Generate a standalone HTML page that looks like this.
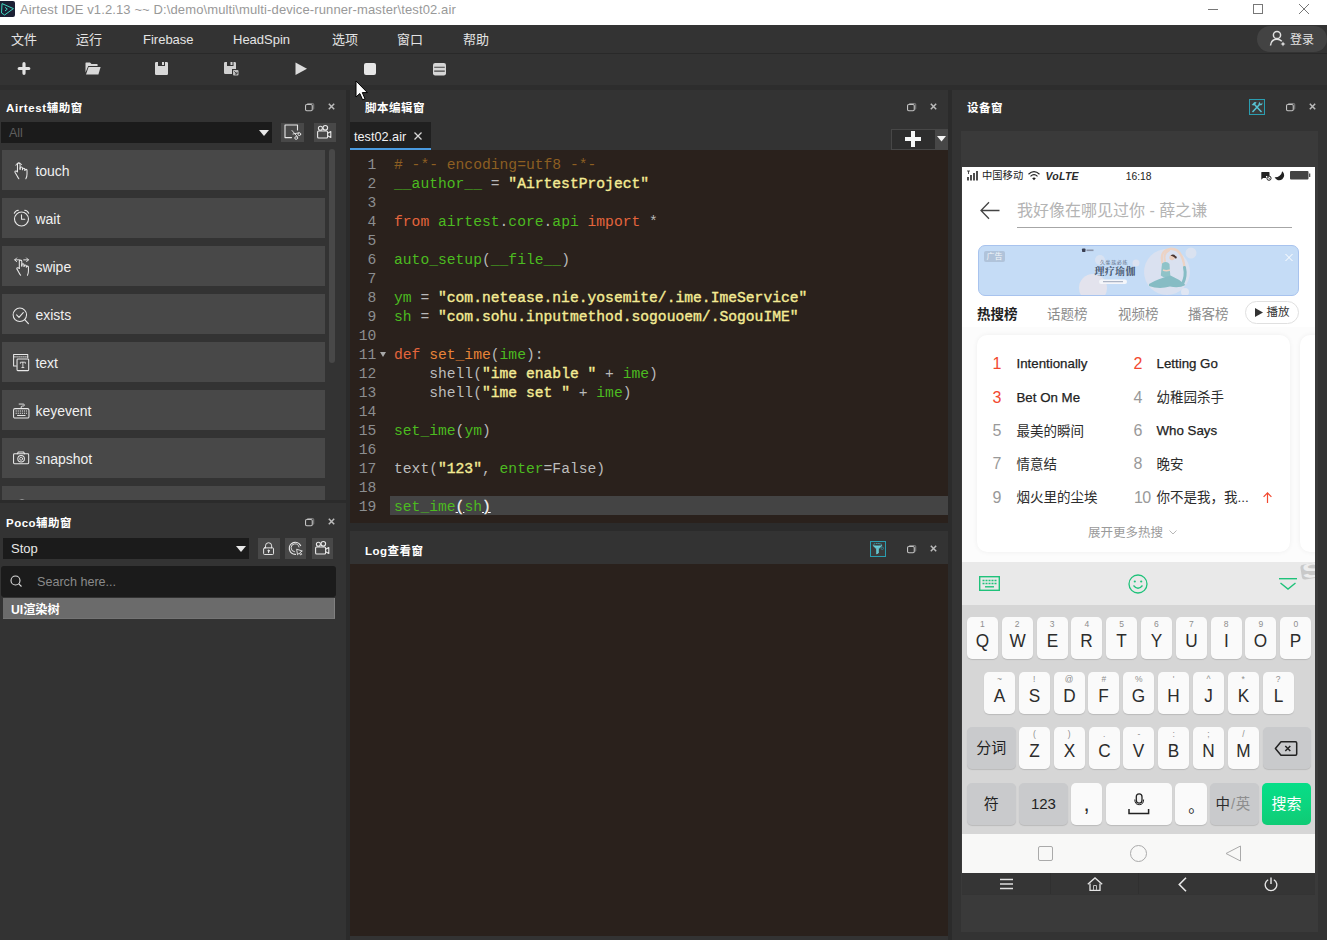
<!DOCTYPE html>
<html lang="zh">
<head>
<meta charset="utf-8">
<title>Airtest IDE</title>
<style>
*{box-sizing:border-box;margin:0;padding:0}
html,body{width:1327px;height:940px;overflow:hidden;background:#2b2b2b}
body{position:relative;font-family:"Liberation Sans","Noto Sans CJK SC",sans-serif;font-size:13px;color:#e6e6e6}
.abs{position:absolute}
svg{display:block;position:absolute;overflow:visible}
/* title bar */
#titlebar{left:0;top:0;width:1327px;height:25px;background:#fff}
#titletext{left:20px;top:2px;font-size:13px;line-height:16px;color:#999;white-space:nowrap;letter-spacing:.12px}
/* menu */
#menubar{left:0;top:25px;width:1327px;height:28px;background:#333}
.menu{top:5.500px;font-size:13px;line-height:18px;color:#e4e4e4;white-space:nowrap}
#menusep{left:0;top:52.500px;width:1327px;height:1px;background:#292929}
#toolbar{left:0;top:54px;width:1327px;height:31px;background:#333}
#gap{left:0;top:85px;width:1327px;height:5px;background:#2d2d2d}
/* panels */
.panel{background:#333}
.ptitle{font-weight:bold;letter-spacing:.5px;font-size:11.500px;line-height:16px;color:#fff;white-space:nowrap}
.abtn{left:2px;width:323px;height:40px;background:#484848}
.abtn span{position:absolute;left:33.400px;top:12px;font-size:14px;line-height:18px;color:#f0f0f0}
.sbtn{background:#484848}
/* code */
#code{left:350px;top:150px;width:598px;height:373px;background:#2a211c;overflow:hidden}
.ln{position:absolute;left:0;width:26.300px;text-align:right;color:#8c8e90;font-family:"Liberation Mono",monospace;font-size:14.67px;line-height:19px;height:19px}
.cl{position:absolute;left:44px;white-space:pre;font-family:"Liberation Mono",monospace;font-size:14.67px;line-height:19px;height:19px;color:#b9b9b9}
.c{color:#8d5f22}.g{color:#4cbb20}.k{color:#e5653c}.s{color:#f4eb94;-webkit-text-stroke:.38px #f4eb94}.o{color:#b4b4b4}.f{color:#e88438}.b{color:#f4f4f4;text-decoration:underline;-webkit-text-stroke:.3px #f4f4f4}.w{color:#bdbdbd}
.ph{font-family:"Liberation Sans","Noto Sans CJK SC",sans-serif}
.key{border-radius:5px;box-shadow:0 1px 1px rgba(0,0,0,.13)}
.key i{position:absolute;left:0;right:0;top:2.500px;text-align:center;font-style:normal;font-size:8.500px;line-height:9px;color:#8e8e8e}
.key b{position:absolute;left:0;right:0;top:11px;text-align:center;font-weight:normal;line-height:26px;white-space:nowrap;transform:scaleX(.93)}
.key b.n{top:8px;transform:none}
</style>
</head>
<body>
<!-- TITLE BAR -->
<div id="titlebar" class="abs">
  <svg style="left:0;top:1px" width="15" height="16" viewBox="0 0 15 16"><path d="M0 0 H13 a2 2 0 0 1 2 2 V14 a2 2 0 0 1 -2 2 H0 Z" fill="#1c2034"/><path d="M2 2.600 L13.400 7.600 L4.600 14 L1.500 12 Z" fill="none" stroke="#3fd6bf" stroke-width="1" stroke-linejoin="round"/><path d="M5 6.300 L7.300 8.100 L5 10" fill="none" stroke="#3fd6bf" stroke-width="1"/></svg>
  <div id="titletext" class="abs">Airtest IDE v1.2.13 ~~ D:\demo\multi\multi-device-runner-master\test02.air</div>
  <svg style="left:1208px;top:9px" width="10" height="1"><rect width="10" height="1" fill="#777"/></svg>
  <svg style="left:1253px;top:4px" width="10" height="10"><rect x=".5" y=".5" width="9" height="9" fill="none" stroke="#777" stroke-width="1"/></svg>
  <svg style="left:1299px;top:4px" width="10" height="10"><path d="M0 0 L10 10 M10 0 L0 10" stroke="#777" stroke-width="1"/></svg>
</div>
<!-- MENU BAR -->
<div id="menubar" class="abs">
  <div class="abs menu" style="left:11px">文件</div>
  <div class="abs menu" style="left:76px">运行</div>
  <div class="abs menu" style="left:143px">Firebase</div>
  <div class="abs menu" style="left:233px">HeadSpin</div>
  <div class="abs menu" style="left:332px">选项</div>
  <div class="abs menu" style="left:397px">窗口</div>
  <div class="abs menu" style="left:463px">帮助</div>
  <div class="abs" style="left:1257px;top:1px;width:70px;height:26px;border-radius:13px;background:#434343"></div>
  <svg style="left:1269px;top:5px" width="18" height="17" viewBox="0 0 18 17"><circle cx="8" cy="5" r="3.6" fill="none" stroke="#e0e0e0" stroke-width="1.5"/><path d="M1.5 15.5 C2 11 5 9.3 8 9.3 C10 9.3 11.6 10 12.8 11.2" fill="none" stroke="#e0e0e0" stroke-width="1.5"/><path d="M14 11.5 L14.8 13.2 L16.5 14 L14.8 14.8 L14 16.5 L13.2 14.8 L11.5 14 L13.2 13.2 Z" fill="#e0e0e0"/></svg>
  <div class="abs menu" style="left:1290px;top:5.500px;font-size:12px">登录</div>
</div>
<div id="menusep" class="abs"></div>
<!-- TOOLBAR -->
<div id="toolbar" class="abs">
  <svg style="left:17px;top:8px" width="14" height="13"><path d="M7 1.700 V11.300 M2.200 6.500 H11.800" stroke="#e2e2e2" stroke-width="3.200" stroke-linecap="round"/></svg>
  <svg style="left:85px;top:8px" width="16" height="13" viewBox="0 0 16 13"><path d="M0.5 10.5 V1 a.6 .6 0 0 1 .6-.6 H5 L6.5 2 H12 a.6 .6 0 0 1 .6 .6 V4 H3.2 Z" fill="#d8d8d8"/><path d="M3.6 5 H15.6 L13.4 12.6 H1 Z" fill="#d8d8d8"/></svg>
  <svg style="left:155px;top:8px" width="13" height="13" viewBox="0 0 13 13"><path d="M1.2 0 H3 V4 H10 V0 H11.8 A1.2 1.2 0 0 1 13 1.2 V11.8 A1.2 1.2 0 0 1 11.800 13 H1.2 A1.2 1.2 0 0 1 0 11.800 V1.2 A1.200 1.200 0 0 1 1.200 0 Z M7 0 H9 V3 H7 Z" fill="#d8d8d8"/></svg>
  <svg style="left:224px;top:8px" width="15" height="14" viewBox="0 0 15 14"><path d="M1.2 0 H3 V4 H9.500 V0 H10.8 A1.2 1.2 0 0 1 12 1.2 V7 H8 V12 H1.2 A1.2 1.2 0 0 1 0 10.800 V1.200 A1.2 1.2 0 0 1 1.200 0 Z M6.500 0 H8.500 V3 H6.500 Z" fill="#d0d0d0"/><rect x="9" y="8" width="5.500" height="5.500" rx="1" fill="#bdbdbd"/><path d="M10.300 9.300 L13 12 M13 10 V12 H11" stroke="#444" stroke-width="1" fill="none"/></svg>
  <svg style="left:295px;top:8px" width="13" height="14"><path d="M0.5 0.500 L12 6.800 L0.500 13 Z" fill="#dcdcdc"/></svg>
  <svg style="left:364px;top:9px" width="12" height="12"><rect width="12" height="12" rx="2" fill="#e6e6e6"/></svg>
  <svg style="left:432.500px;top:8.800px" width="13" height="12.400" viewBox="0 0 13 12.400"><rect width="13" height="12.400" rx="2.200" fill="#d6d6d6"/><path d="M1.200 4.300 H11.800 M1.200 8.100 H11.800" stroke="#444" stroke-width="1.100"/></svg>
</div>
<div id="gap" class="abs"></div>

<!-- LEFT: AIRTEST PANEL -->
<div id="airtest" class="abs panel" style="left:0;top:90px;width:346px;height:410px;overflow:hidden">
  <div class="abs ptitle" style="left:6px;top:10px"><span style="letter-spacing:.6px">Airtest</span>辅助窗</div>
  <svg style="left:304.800px;top:12.800px" width="9.200" height="8.300" viewBox="0 0 10 9"><rect x=".6" y="1.600" width="7.300" height="6.800" rx="1.300" fill="none" stroke="#c4c4c4" stroke-width="1.200"/><path d="M2 1.300 Q2.300 .5 3.200 .5 H8.300 Q9.500 .5 9.500 1.700 V6 Q9.500 6.800 8.600 7.200" fill="none" stroke="#8c8c8c" stroke-width="1"/></svg>
  <svg style="left:328px;top:13px" width="7" height="7"><path d="M.8 .8 L6.200 6.200 M6.200 .8 L.8 6.200" stroke="#bcbcbc" stroke-width="1.500"/></svg>
  <div class="abs" style="left:1px;top:32px;width:271px;height:21px;background:#1b1b1b"></div>
  <div class="abs" style="left:9px;top:36px;font-size:12.500px;line-height:15px;color:#5e5e5e">All</div>
  <svg style="left:259px;top:40px" width="10" height="6"><path d="M0 0 H10 L5 6 Z" fill="#e8e8e8"/></svg>
  <div class="abs sbtn" style="left:281px;top:33px;width:23px;height:19px"><svg style="left:3px;top:1px" width="17" height="16" viewBox="0 0 17 16" fill="none" stroke="#e8e8e8" stroke-width="1.100" stroke-linecap="round" stroke-linejoin="round"><path d="M7.500 13.600 H1 V1 H13.500 V6"/><path d="M8 6.500 L13.500 12.800 M9 10 L15 8.800" stroke-width=".9"/><circle cx="15.300" cy="10.200" r="1.400" stroke-width=".9"/><circle cx="12.200" cy="14" r="1.400" stroke-width=".9"/></svg></div>
  <div class="abs sbtn" style="left:314px;top:33px;width:21.500px;height:19px"><svg style="left:3px;top:2px" width="15" height="14" viewBox="0 0 15 14" fill="none" stroke="#e8e8e8" stroke-width="1.100" stroke-linecap="round" stroke-linejoin="round"><rect x=".6" y="6" width="10" height="7" rx="1"/><circle cx="3.400" cy="3.300" r="2"/><circle cx="8.300" cy="2.800" r="2.300"/><path d="M10.600 8.300 L13.800 6.500 V12.500 L10.600 10.700"/></svg></div>
  <div class="abs abtn" style="top:60px"><svg style="left:11.800px;top:10.500px" width="13.500" height="18.500" viewBox="0 0 14 19" fill="none" stroke="#e8e8e8" stroke-width="1.100" stroke-linecap="round" stroke-linejoin="round"><path d="M3.600 11 V3.400 a1.350 1.350 0 0 1 2.700 0 V8.500"/><path d="M6.300 8.500 V7.400 a1.250 1.250 0 0 1 2.500 0 V9"/><path d="M8.800 8.600 a1.250 1.250 0 0 1 2.500 0 V9.600"/><path d="M11.300 9.600 a1.100 1.100 0 0 1 2.200 .2 V13.500 Q13.500 16.500 12.300 18.300"/><path d="M3.600 11 L2.300 10.300 Q.8 10 1 11.500 L3.300 15.500 Q4 17 5 18.300"/><path d="M1.900 4.300 A3.300 3.300 0 0 1 8 3.600" stroke-width=".9"/></svg><span>touch</span></div>
  <div class="abs abtn" style="top:108px"><svg style="left:11px;top:11px" width="17" height="18" viewBox="0 0 17 18" fill="none" stroke="#e8e8e8" stroke-width="1.100" stroke-linecap="round" stroke-linejoin="round"><circle cx="8.500" cy="10" r="7"/><path d="M8.500 5.800 V10.200 H11.800"/><path d="M1.300 4.300 Q2.500 1.300 5.300 1.200 M15.700 4.300 Q14.500 1.300 11.700 1.200"/></svg><span>wait</span></div>
  <div class="abs abtn" style="top:156px"><svg style="left:11.500px;top:10.5px" width="15.200" height="19" viewBox="0 0 16 20" fill="none" stroke="#e8e8e8" stroke-width="1.100" stroke-linecap="round" stroke-linejoin="round"><path d="M.8 3 H5.800 M2.800 1 L.8 3 L2.800 5 M10.200 3 H15.200 M13.200 1 L15.200 3 L13.200 5" stroke-width="1"/><path d="M5.600 12 V4.600 a1.300 1.300 0 0 1 2.600 0 V9.500"/><path d="M8.200 9.500 V8.400 a1.200 1.200 0 0 1 2.400 0 V10"/><path d="M10.600 9.600 a1.200 1.200 0 0 1 2.400 0 V10.600"/><path d="M13 10.600 a1.100 1.100 0 0 1 2.200 .2 V14.500 Q15.200 17.500 14.200 19.200"/><path d="M5.600 12 L4.300 11.300 Q2.800 11 3 12.500 L5.300 16.500 Q6 18 7 19.200"/></svg><span>swipe</span></div>
  <div class="abs abtn" style="top:204px"><svg style="left:10px;top:12.5px" width="17.500" height="17.500" viewBox="0 0 19 19" fill="none" stroke="#e8e8e8" stroke-width="1.100" stroke-linecap="round" stroke-linejoin="round"><circle cx="8.500" cy="8.500" r="7.300"/><path d="M5 8.600 L7.600 11.200 L12.200 6" stroke-width="1.200"/><path d="M13.800 13.800 L17.800 18" stroke-width="1.300"/></svg><span>exists</span></div>
  <div class="abs abtn" style="top:252px"><svg style="left:11px;top:11.5px" width="16.300" height="17.200" viewBox="0 0 17 18" fill="none" stroke="#e8e8e8" stroke-width="1.100" stroke-linecap="round" stroke-linejoin="round"><path d="M3.500 12.500 H.6 V.6 H15.400 V4"/><path d="M.6 3 H15.400" stroke-width=".9" stroke-dasharray="1 1"/><rect x="4.200" y="5.200" width="12.200" height="12.200" rx=".8"/><path d="M7.700 9.800 V8.600 H12.900 V9.800 M10.300 8.600 V14.200 M9.200 14.200 H11.400" stroke-width=".9"/></svg><span>text</span></div>
  <div class="abs abtn" style="top:300px"><svg style="left:11px;top:11.5px" width="17" height="17" viewBox="0 0 18 18" fill="none" stroke="#e8e8e8" stroke-width="1.100" stroke-linecap="round" stroke-linejoin="round"><rect x=".6" y="7" width="16.300" height="10" rx="1.500"/><path d="M2.800 9.600 H14.800 M2.800 11.900 H14.800" stroke-dasharray="1.200 1" stroke-linecap="butt"/><path d="M4.800 14.400 H12.800"/><path d="M8.700 7 V5.300 Q8.700 4.300 9.700 4.300 H11 Q12 4.300 12 3.200 Q12 2.200 11 2.200 H6.500" stroke-width="1"/></svg><span>keyevent</span></div>
  <div class="abs abtn" style="top:348px"><svg style="left:11px;top:12.5px" width="17" height="14.200" viewBox="0 0 18 15" fill="none" stroke="#e8e8e8" stroke-width="1.100" stroke-linecap="round" stroke-linejoin="round"><rect x=".6" y="3" width="16" height="10.500" rx="1"/><path d="M4.500 3 L5.600 1 H11.200 L12.300 3"/><circle cx="8.600" cy="8.200" r="3.500"/><circle cx="8.600" cy="8.200" r="1.600" stroke-width=".9"/></svg><span>snapshot</span></div>
  <div class="abs abtn" style="top:396px"><svg style="left:12px;top:13px" width="16" height="16" viewBox="0 0 16 16" fill="none" stroke="#e8e8e8" stroke-width="1.100" stroke-linecap="round" stroke-linejoin="round"><circle cx="8" cy="8" r="7"/></svg></div>
  <div class="abs" style="left:329px;top:59px;width:6px;height:214px;border-radius:3px;background:#484848"></div>
</div>
<div class="abs" style="left:0;top:500px;width:346px;height:4px;background:#2b2b2b"></div>

<!-- LEFT: POCO PANEL -->
<div id="poco" class="abs panel" style="left:0;top:503px;width:346px;height:437px">
  <div class="abs ptitle" style="left:6px;top:12px">Poco辅助窗</div>
  <svg style="left:304.800px;top:14.800px" width="9.200" height="8.300" viewBox="0 0 10 9"><rect x=".6" y="1.600" width="7.300" height="6.800" rx="1.300" fill="none" stroke="#c4c4c4" stroke-width="1.200"/><path d="M2 1.300 Q2.300 .5 3.200 .5 H8.300 Q9.500 .5 9.500 1.700 V6 Q9.500 6.800 8.600 7.200" fill="none" stroke="#8c8c8c" stroke-width="1"/></svg>
  <svg style="left:328px;top:15px" width="7" height="7"><path d="M.8 .8 L6.200 6.200 M6.200 .8 L.8 6.200" stroke="#bcbcbc" stroke-width="1.500"/></svg>
  <div class="abs" style="left:3px;top:35px;width:246px;height:21px;background:#1b1b1b"></div>
  <div class="abs" style="left:11px;top:38px;font-size:13px;line-height:15px;color:#e8e8e8">Stop</div>
  <svg style="left:236px;top:43px" width="10" height="6"><path d="M0 0 H10 L5 6 Z" fill="#e8e8e8"/></svg>
  <div class="abs sbtn" style="left:258px;top:35px;width:21.500px;height:21px"><svg style="left:5px;top:4px" width="11.500" height="13.500" viewBox="0 0 13 15" fill="none" stroke="#e8e8e8" stroke-width="1.100" stroke-linecap="round" stroke-linejoin="round" stroke-width="1.300"><rect x=".7" y="6.500" width="11.200" height="7.500" rx="1"/><path d="M2.800 6.500 V4.200 a3.500 3.500 0 0 1 7 0 V6.500"/><circle cx="6.300" cy="9.800" r=".8" fill="#e8e8e8"/><path d="M6.300 10.500 V12"/></svg></div>
  <div class="abs sbtn" style="left:284.500px;top:35px;width:21.500px;height:21px"><svg style="left:3px;top:3px" width="16" height="16" viewBox="0 0 16 16" fill="none" stroke="#e8e8e8" stroke-width="1.100" stroke-linecap="round" stroke-linejoin="round"><path d="M12.600 4.500 A6 6 0 1 0 7.500 13.300" stroke-width="1.200"/><path d="M11 6 A4 4 0 1 0 6.500 10.800" stroke-width=".9"/><path d="M9 8.300 L14.300 10 L12.300 11.200 L13.700 13.300 L12.600 14 L11.300 12 L9.800 13.500 Z" stroke-width=".9"/></svg></div>
  <div class="abs sbtn" style="left:311.500px;top:35px;width:21.500px;height:21px"><svg style="left:3px;top:3px" width="15" height="14" viewBox="0 0 15 14" fill="none" stroke="#e8e8e8" stroke-width="1.100" stroke-linecap="round" stroke-linejoin="round"><rect x=".6" y="6" width="10" height="7" rx="1"/><circle cx="3.400" cy="3.300" r="2"/><circle cx="8.300" cy="2.800" r="2.300"/><path d="M10.600 8.300 L13.800 6.500 V12.500 L10.600 10.700"/></svg></div>
  <div class="abs" style="left:1px;top:63px;width:335px;height:31px;background:#1b1b1b;border-radius:3px"></div>
  <svg style="left:10px;top:72px" width="13" height="13" viewBox="0 0 13 13"><circle cx="5.500" cy="5.500" r="4.500" fill="none" stroke="#dcdcdc" stroke-width="1.100"/><path d="M8.800 8.800 L11.500 11.500" stroke="#dcdcdc" stroke-width="1.100"/></svg>
  <div class="abs" style="left:37px;top:71px;font-size:12.600px;line-height:16px;color:#8a8a8a">Search here...</div>
  <div class="abs" style="left:3px;top:95px;width:332px;height:21px;background:#6b6b6b;border-right:1px solid #808080;border-bottom:1px solid #747474"></div>
  <div class="abs" style="left:11px;top:98.500px;font-size:12.200px;font-weight:bold;line-height:16px;color:#fff">UI渲染树</div>
</div>

<!-- CENTER: EDITOR PANEL -->
<div id="editor" class="abs panel" style="left:350px;top:90px;width:598px;height:433px"></div>
<div class="abs ptitle" style="left:365px;top:100px">脚本编辑窗</div>
<svg style="left:906.800px;top:102.900px" width="9.200" height="8.300" viewBox="0 0 10 9"><rect x=".6" y="1.600" width="7.300" height="6.800" rx="1.300" fill="none" stroke="#c4c4c4" stroke-width="1.200"/><path d="M2 1.300 Q2.300 .5 3.200 .5 H8.300 Q9.500 .5 9.500 1.700 V6 Q9.500 6.800 8.600 7.200" fill="none" stroke="#8c8c8c" stroke-width="1"/></svg>
<svg style="left:930px;top:103px" width="7" height="7"><path d="M.8 .8 L6.200 6.200 M6.200 .8 L.8 6.200" stroke="#bcbcbc" stroke-width="1.500"/></svg>
<div class="abs" style="left:350px;top:122px;width:81px;height:26px;background:#202020"></div>
<div class="abs" style="left:350px;top:148px;width:80.500px;height:2px;background:#4a9be0"></div>
<div class="abs" style="left:354px;top:128.500px;font-size:12.700px;line-height:16px;color:#f2f2f2;white-space:nowrap">test02.air</div>
<svg style="left:414px;top:132px" width="8" height="8"><path d="M.5 .5 L7.500 7.500 M7.500 .5 L.5 7.500" stroke="#d8d8d8" stroke-width="1.300"/></svg>
<div class="abs" style="left:891px;top:129px;width:57px;height:21px;background:#474747"></div><div class="abs" style="left:892px;top:130px;width:43px;height:19px;background:#2d2d2d"></div>
<svg style="left:905px;top:131px" width="16" height="16"><path d="M8 0 V16 M0 8 H16" stroke="#f6f8f8" stroke-width="4"/></svg>

<svg style="left:937px;top:136px" width="9" height="5.500"><path d="M0 0 H9 L4.500 5.500 Z" fill="#f4f4f4"/></svg>

<div id="code" class="abs">
  <div class="abs" style="left:40px;top:346px;width:558px;height:19px;background:#444"></div>
  <div class="ln" style="top:6px">1</div><div class="cl" style="top:6px"><span class="c"># -*- encoding=utf8 -*-</span></div>
  <div class="ln" style="top:25px">2</div><div class="cl" style="top:25px"><span class="g">__author__</span> = <span class="s">"AirtestProject"</span></div>
  <div class="ln" style="top:44px">3</div>
  <div class="ln" style="top:63px">4</div><div class="cl" style="top:63px"><span class="k">from</span> <span class="g">airtest</span>.<span class="g">core</span>.<span class="g">api</span> <span class="k">import</span> *</div>
  <div class="ln" style="top:82px">5</div>
  <div class="ln" style="top:101px">6</div><div class="cl" style="top:101px"><span class="g">auto_setup</span>(<span class="g">__file__</span>)</div>
  <div class="ln" style="top:120px">7</div>
  <div class="ln" style="top:139px">8</div><div class="cl" style="top:139px"><span class="g">ym</span> = <span class="s">"com.netease.nie.yosemite/.ime.ImeService"</span></div>
  <div class="ln" style="top:158px">9</div><div class="cl" style="top:158px"><span class="g">sh</span> = <span class="s">"com.sohu.inputmethod.sogouoem/.SogouIME"</span></div>
  <div class="ln" style="top:177px">10</div>
  <div class="ln" style="top:196px">11</div><div class="cl" style="top:196px"><span class="k">def</span> <span class="f">set_ime</span>(<span class="g">ime</span>):</div>
  <div class="ln" style="top:215px">12</div><div class="cl" style="top:215px">    <span class="w">shell</span>(<span class="s">"ime enable "</span> + <span class="g">ime</span>)</div>
  <div class="ln" style="top:234px">13</div><div class="cl" style="top:234px">    <span class="w">shell</span>(<span class="s">"ime set "</span> + <span class="g">ime</span>)</div>
  <div class="ln" style="top:253px">14</div>
  <div class="ln" style="top:272px">15</div><div class="cl" style="top:272px"><span class="g">set_ime</span>(<span class="g">ym</span>)</div>
  <div class="ln" style="top:291px">16</div>
  <div class="ln" style="top:310px">17</div><div class="cl" style="top:310px"><span class="w">text</span>(<span class="s">"123"</span>, <span class="g">enter</span>=<span class="w">False</span>)</div>
  <div class="ln" style="top:329px">18</div>
  <div class="ln" style="top:348px">19</div><div class="cl" style="top:348px"><span class="g">set_ime</span><span class="b">(</span><span class="g">sh</span><span class="b">)</span></div>
  <svg style="left:30px;top:202px" width="6" height="5"><path d="M0 0 H6 L3 5 Z" fill="#a8a8a8"/></svg>
</div>


<!-- LOG PANEL -->
<div id="log" class="abs panel" style="left:350px;top:531px;width:598px;height:409px"></div>
<div class="abs ptitle" style="left:365px;top:543px">Log查看窗</div>
<svg style="left:906.900px;top:544.900px" width="9.200" height="8.300" viewBox="0 0 10 9"><rect x=".6" y="1.600" width="7.300" height="6.800" rx="1.300" fill="none" stroke="#c4c4c4" stroke-width="1.200"/><path d="M2 1.300 Q2.300 .5 3.200 .5 H8.300 Q9.500 .5 9.500 1.700 V6 Q9.500 6.800 8.600 7.200" fill="none" stroke="#8c8c8c" stroke-width="1"/></svg>
<svg style="left:930px;top:545px" width="7" height="7"><path d="M.8 .8 L6.200 6.200 M6.200 .8 L.8 6.200" stroke="#bcbcbc" stroke-width="1.500"/></svg>
<div class="abs" style="left:350px;top:564px;width:598px;height:372px;background:#2a211c"></div>
<div class="abs" style="left:870px;top:541px;width:16px;height:16px;border:1px solid #2a9db0;background:#3a3a3a"></div>
<svg style="left:872px;top:543px" width="12" height="12" viewBox="0 0 12 12"><ellipse cx="5.500" cy="2" rx="4.500" ry="1.500" fill="none" stroke="#3fb4c4" stroke-width=".9" stroke-dasharray="1.500 .7"/><path d="M1 2.500 L4.600 6 V11 L6.400 10 V6 L10 2.500" fill="#6fdbe6" fill-opacity=".85" stroke="#6fdbe6" stroke-width=".6"/><circle cx="10.300" cy="5.300" r="1.200" fill="none" stroke="#2f8fa0" stroke-width=".8"/></svg>

<!-- RIGHT: DEVICE PANEL -->
<div id="device" class="abs panel" style="left:952px;top:90px;width:375px;height:850px"></div>
<div class="abs ptitle" style="left:967px;top:100px">设备窗</div>
<svg style="left:1286px;top:103px" width="9.200" height="8.300" viewBox="0 0 10 9"><rect x=".6" y="1.600" width="7.300" height="6.800" rx="1.300" fill="none" stroke="#c4c4c4" stroke-width="1.200"/><path d="M2 1.300 Q2.300 .5 3.200 .5 H8.300 Q9.500 .5 9.500 1.700 V6 Q9.500 6.800 8.600 7.200" fill="none" stroke="#8c8c8c" stroke-width="1"/></svg>
<svg style="left:1309px;top:103px" width="7" height="7"><path d="M.8 .8 L6.200 6.200 M6.200 .8 L.8 6.200" stroke="#bcbcbc" stroke-width="1.500"/></svg>
<div class="abs" style="left:961px;top:131px;width:357px;height:801px;background:#3a3a3a"></div>
<div class="abs" style="left:1249px;top:99px;width:16px;height:16px;border:1px solid #2a9db0;background:#3a3a3a"></div>
<svg style="left:1250px;top:100px" width="14" height="14" viewBox="0 0 14 14"><path d="M2.500 12 L9.500 4.500" stroke="#58c4d4" stroke-width="1.500"/><path d="M11.500 12 L4.300 4.300" stroke="#58c4d4" stroke-width="1.500"/><path d="M1.600 5 L4.200 2.200 Q5.500 1.500 6.600 2.400 L4 5.600 Z" fill="#58c4d4"/><path d="M8.600 4.600 Q8.300 2.800 9.800 1.800 L10 3.600 L11.400 3.800 L12.400 2.400 Q12.800 4.400 11.300 5.200 Q10 5.700 8.600 4.600 Z" fill="#58c4d4"/></svg>
<div class="abs" style="left:962px;top:873px;width:353px;height:21px;background:#353535"></div>
<div class="abs" style="left:1050px;top:873px;width:1px;height:21px;background:#303030"></div><div class="abs" style="left:1138px;top:873px;width:1px;height:21px;background:#303030"></div><div class="abs" style="left:962px;top:894px;width:353px;height:1px;background:#343434"></div>
<svg style="left:1000px;top:878px" width="13" height="12" viewBox="0 0 13 12"><path d="M0 1.500 H13 M0 6 H13 M0 10.500 H13" stroke="#e0e0e0" stroke-width="1.500"/></svg>
<svg style="left:1087px;top:877px" width="16" height="14" viewBox="0 0 16 14"><path d="M.8 7.300 L8 .9 L15.200 7.300" fill="none" stroke="#e4e4e4" stroke-width="1.300"/><path d="M3 6.500 V13.300 H13 V6.500" fill="none" stroke="#e4e4e4" stroke-width="1.300"/><path d="M6.500 13 V8.500 H9.500 V13" fill="none" stroke="#bdbdbd" stroke-width="1"/></svg>
<svg style="left:1178px;top:877px" width="9" height="15" viewBox="0 0 9 15"><path d="M8 .8 L1.300 7.500 L8 14.200" fill="none" stroke="#e8e8e8" stroke-width="1.600"/></svg>
<svg style="left:1264px;top:877px" width="14" height="15" viewBox="0 0 14 15"><path d="M7 .5 V7" stroke="#e8e8e8" stroke-width="1.400"/><path d="M4.200 2.700 A5.800 5.800 0 1 0 9.800 2.700" fill="none" stroke="#e8e8e8" stroke-width="1.300"/></svg>
<div id="phone" class="abs" style="left:962px;top:167px;width:353px;height:706px;background:#fff;overflow:hidden">
<div class="abs" style="left:0;top:0;width:353px;height:395px;background:#fff"></div>
<div class="abs" style="left:0;top:160px;width:353px;height:235px;background:#fcfcfc"></div>
<svg style="left:5px;top:4px" width="12" height="10" viewBox="0 0 12 10"><path d="M1 6 V9.500 M4 4 V9.500 M7 2 V9.500 M10 0 V9.500" stroke="#222" stroke-width="1.600"/><path d="M0 0 H3 M1.500 0 V3" stroke="#222" stroke-width=".8"/></svg>
<div class="abs ph" style="left:20px;top:2px;font-size:10.300px;line-height:14px;color:#222">中国移动</div>
<svg style="left:66px;top:4px" width="12" height="10" viewBox="0 0 12 10"><path d="M.5 3.200 Q6 -1.800 11.500 3.200 M2.500 5.400 Q6 2 9.500 5.400" fill="none" stroke="#222" stroke-width="1.200"/><path d="M4.200 7.300 Q6 5.600 7.800 7.300 L6 9.300 Z" fill="#222"/></svg>
<div class="abs" style="left:83.500px;top:2px;font-size:10.500px;line-height:14px;color:#2a2a2a;font-style:italic;font-weight:bold;letter-spacing:.25px">VoLTE</div>
<div class="abs" style="left:163.700px;top:2.600px;font-size:10.300px;line-height:14px;color:#222">16:18</div>
<svg style="left:298.500px;top:4.500px" width="11" height="9" viewBox="0 0 11 9"><path d="M.3 .5 Q.3 0 .8 0 H8 Q8.500 0 8.500 .5 V4 H5 V6 H2 L.3 7.800 Z" fill="#222"/><circle cx="8" cy="6.200" r="2.100" fill="#fff" stroke="#222" stroke-width="1"/><path d="M6.800 5 L9.200 7.400" stroke="#222" stroke-width=".7"/></svg>
<svg style="left:312px;top:4px" width="11" height="10" viewBox="0 0 11 10"><path d="M8.200 .3 A5 5 0 1 1 .6 6.300 A7 7 0 0 0 8.200 .3 Z" fill="#222"/></svg>
<svg style="left:328px;top:4px" width="21" height="9" viewBox="0 0 21 9"><rect x="0" y="0" width="18.500" height="8.500" rx="1" fill="#444"/><rect x="19" y="2.500" width="1.300" height="3.500" fill="#555"/></svg>
<svg style="left:18px;top:34.500px" width="20" height="17" viewBox="0 0 20 17"><path d="M9 .3 L1 8.500 L9 16.700 M1 8.500 H19.500" fill="none" stroke="#444" stroke-width="1.300"/></svg>
<div class="abs ph" style="left:55px;top:33px;font-size:16px;line-height:22px;color:#b4b4b4;white-space:nowrap">我好像在哪见过你 - 薛之谦</div>
<div class="abs" style="left:55px;top:60px;width:275px;height:1px;background:#a6a6a6"></div>
<div class="abs" style="left:16px;top:78px;width:321px;height:51px;border-radius:7px;background:#c5dcf6;border:1px solid #a8c3ee;overflow:hidden"><svg style="left:0;top:0" width="319" height="49" viewBox="0 0 319 49"><circle cx="114" cy="42" r="14" fill="#ece6ea" opacity=".75"/><circle cx="121" cy="14" r="5" fill="#e4e6f0" opacity=".6"/><circle cx="157" cy="17" r="3.500" fill="#e6e4ee" opacity=".7"/><circle cx="188" cy="26" r="23" fill="#dde2ee" opacity=".85"/><circle cx="212" cy="7" r="5.500" fill="#dfe3ef" opacity=".8"/><circle cx="206" cy="46" r="4" fill="#e6e8f2" opacity=".8"/><path d="M183.500 17 Q180.500 4.500 191 2.800 Q203 2 205.500 21" fill="none" stroke="#ecd3c5" stroke-width="2.300" stroke-linecap="round"/><path d="M186 15 Q184 7 190 4.500" fill="none" stroke="#ecd3c5" stroke-width="2" stroke-linecap="round"/><circle cx="193" cy="11.600" r="2.700" fill="#eacdbc"/><path d="M191.500 9.400 Q194.500 7.500 196.500 10 Q198.300 10.300 197.500 12.300 Q196 13 195.300 11.300 Q193.500 9.800 191.500 9.400 Z" fill="#4b3530"/><path d="M183 17.500 Q187.500 14.500 190.500 18 L191.300 30 Q186 33 181.800 29.500 Z" fill="#8fc3c8"/><path d="M184 24 Q187 25.500 191 24" fill="none" stroke="#ecd3c5" stroke-width="1.500"/><path d="M203.500 38 Q207.500 30 205.500 21.500" fill="none" stroke="#86bcc4" stroke-width="3" stroke-linecap="round"/><path d="M170 38 Q179 32.500 191.500 29.500 Q200 33 206.500 39 Q200 42.500 191 40.500 Q180 43.500 170 40 Z" fill="#86bcc4"/><rect x="103" y="2.500" width="3.500" height="3.500" rx=".8" fill="#3a3f52"/><rect x="107.500" y="3.500" width="7" height="1.600" fill="#8a93a8"/><rect x="120" y="33.500" width="28" height="4.500" rx="2.200" fill="#f4f6fa"/><rect x="124" y="35.200" width="20" height="1" fill="#9aa4b8"/><path d="M306.500 8 L313.500 15 M313.500 8 L306.500 15" stroke="#fff" stroke-width="1"/></svg><div class="abs" style="left:5px;top:5px;width:21px;height:11px;border-radius:2px;background:rgba(150,165,185,.45)"></div><div class="abs ph" style="left:7.500px;top:5px;font-size:8px;line-height:11px;color:#f2f5f8;white-space:nowrap">广告</div><div class="abs ph" style="left:121px;top:12.500px;font-size:5px;line-height:7px;color:#5e6d86;letter-spacing:.6px;white-space:nowrap">久坐族必练</div><div class="abs" style="left:115.500px;top:17.500px;font-size:10px;line-height:14px;color:#46546c;font-family:'Noto Serif CJK SC',serif;font-weight:bold;white-space:nowrap;letter-spacing:.3px">理疗瑜伽</div></div>
<div class="abs ph" style="left:15px;top:138px;font-size:13.500px;line-height:20px;color:#222;font-weight:bold;white-space:nowrap">热搜榜</div>
<div class="abs ph" style="left:85px;top:138px;font-size:13.500px;line-height:20px;color:#8c8c8c;white-space:nowrap">话题榜</div>
<div class="abs ph" style="left:156px;top:138px;font-size:13.500px;line-height:20px;color:#8c8c8c;white-space:nowrap">视频榜</div>
<div class="abs ph" style="left:226px;top:138px;font-size:13.500px;line-height:20px;color:#8c8c8c;white-space:nowrap">播客榜</div>
<div class="abs" style="left:282.500px;top:133.500px;width:54.500px;height:23.500px;border-radius:12px;background:#fff;border:1px solid #e0e0e0"></div>
<svg style="left:293px;top:140.500px" width="8" height="9"><path d="M0 0 L8 4.500 L0 9 Z" fill="#333"/></svg>
<div class="abs ph" style="left:304.500px;top:137px;font-size:11.500px;line-height:17px;color:#333;white-space:nowrap">播放</div>
<div class="abs" style="left:15px;top:168px;width:313px;height:217px;border-radius:10px;background:#fff;box-shadow:0 0 5px rgba(0,0,0,.06)"></div>
<div class="abs" style="left:338px;top:168px;width:40px;height:217px;border-radius:10px;background:#fff;box-shadow:0 0 5px rgba(0,0,0,.06)"></div>
<div class="abs" style="left:27px;width:16px;text-align:center;top:187.3px;font-size:16px;line-height:20px;color:#f2482f">1</div>
<div class="abs ph" style="left:54.5px;top:187.3px;font-size:13.300px;line-height:20px;color:#222;white-space:nowrap;-webkit-text-stroke:.25px #222;">Intentionally</div>
<div class="abs" style="left:168px;width:16px;text-align:center;top:187.3px;font-size:16px;line-height:20px;color:#f2482f">2</div>
<div class="abs ph" style="left:194.5px;top:187.3px;font-size:13.300px;line-height:20px;color:#222;white-space:nowrap;-webkit-text-stroke:.25px #222;">Letting Go</div>
<div class="abs" style="left:27px;width:16px;text-align:center;top:220.6px;font-size:16px;line-height:20px;color:#f2482f">3</div>
<div class="abs ph" style="left:54.5px;top:220.6px;font-size:13.300px;line-height:20px;color:#222;white-space:nowrap;-webkit-text-stroke:.25px #222;">Bet On Me</div>
<div class="abs" style="left:168px;width:16px;text-align:center;top:220.6px;font-size:16px;line-height:20px;color:#999">4</div>
<div class="abs ph" style="left:194.5px;top:221.3px;font-size:13.500px;line-height:20px;color:#2c2c2c;white-space:nowrap;">幼稚园杀手</div>
<div class="abs" style="left:27px;width:16px;text-align:center;top:253.9px;font-size:16px;line-height:20px;color:#999">5</div>
<div class="abs ph" style="left:54.5px;top:254.6px;font-size:13.500px;line-height:20px;color:#2c2c2c;white-space:nowrap;">最美的瞬间</div>
<div class="abs" style="left:168px;width:16px;text-align:center;top:253.9px;font-size:16px;line-height:20px;color:#999">6</div>
<div class="abs ph" style="left:194.5px;top:253.9px;font-size:13.300px;line-height:20px;color:#222;white-space:nowrap;-webkit-text-stroke:.25px #222;">Who Says</div>
<div class="abs" style="left:27px;width:16px;text-align:center;top:287.2px;font-size:16px;line-height:20px;color:#999">7</div>
<div class="abs ph" style="left:54.5px;top:287.9px;font-size:13.500px;line-height:20px;color:#2c2c2c;white-space:nowrap;">情意结</div>
<div class="abs" style="left:168px;width:16px;text-align:center;top:287.2px;font-size:16px;line-height:20px;color:#999">8</div>
<div class="abs ph" style="left:194.5px;top:287.9px;font-size:13.500px;line-height:20px;color:#2c2c2c;white-space:nowrap;">晚安</div>
<div class="abs" style="left:27px;width:16px;text-align:center;top:320.5px;font-size:16px;line-height:20px;color:#999">9</div>
<div class="abs ph" style="left:54.5px;top:321.2px;font-size:13.500px;line-height:20px;color:#2c2c2c;white-space:nowrap;">烟火里的尘埃</div>
<div class="abs" style="left:172px;top:320.5px;font-size:16px;line-height:20px;color:#999;letter-spacing:-.6px">10</div>
<div class="abs ph" style="left:194.5px;top:321.2px;font-size:13.500px;line-height:20px;color:#2c2c2c;white-space:nowrap;">你不是我，我...</div>
<svg style="left:301px;top:325px" width="9" height="11" viewBox="0 0 9 11"><path d="M4.500 11 V1 M.6 4.800 L4.500 .9 L8.400 4.800" fill="none" stroke="#f2482f" stroke-width="1.200"/></svg>
<div class="abs ph" style="left:126px;top:357px;font-size:12.500px;line-height:18px;color:#9a9a9a;white-space:nowrap">展开更多热搜</div>
<svg style="left:207px;top:363px" width="8" height="5"><path d="M.5 .5 L4 4 L7.500 .5" fill="none" stroke="#b8b8b8" stroke-width="1"/></svg>
<div class="abs" style="left:0;top:395px;width:353px;height:43px;background:#e9e9e9"></div>
<div class="abs" style="left:0;top:438px;width:353px;height:229px;background:#d6d6d6"></div>
<svg style="left:17px;top:409px" width="21" height="15" viewBox="0 0 21 15"><rect x=".7" y=".7" width="19.600" height="13.600" fill="none" stroke="#1fc27a" stroke-width="1.400"/><path d="M3.500 4.500 H17.500 M3.500 7.500 H17.500" stroke="#1fc27a" stroke-width="1.400" stroke-dasharray="2 1"/><path d="M6 10.800 H15" stroke="#1fc27a" stroke-width="1.400"/></svg>
<svg style="left:166px;top:407px" width="20" height="20" viewBox="0 0 20 20"><circle cx="10" cy="10" r="9" fill="none" stroke="#1fc27a" stroke-width="1.300"/><circle cx="6.800" cy="7.500" r="1.100" fill="#1fc27a"/><circle cx="13.200" cy="7.500" r="1.100" fill="#1fc27a"/><path d="M5.500 11.500 Q10 17 14.500 11.500" fill="none" stroke="#1fc27a" stroke-width="1.300"/></svg>
<svg style="left:317px;top:411px" width="18" height="12" viewBox="0 0 18 12"><path d="M0 .7 H18" stroke="#1fc27a" stroke-width="1.400"/><path d="M1.500 5 L9 11 L16.500 5" fill="none" stroke="#1fc27a" stroke-width="1.400"/></svg>
<div class="abs" style="left:338.500px;top:396px;width:26px;height:15px;border-radius:3px;background:#c9c9c9;transform:rotate(-9deg);overflow:hidden"><div class="abs" style="left:1px;top:-5px;font-size:21px;line-height:24px;font-weight:bold;color:#ededed;transform:scaleX(1.500);transform-origin:0 0">S</div></div>
<div class="abs key" style="left:4.8px;top:450.0px;width:31.0px;height:41.5px;background:#fafafa"><i>1</i><b style="font-size:18.5px;color:#2c2c2c" class="">Q</b></div>
<div class="abs key" style="left:39.6px;top:450.0px;width:31.0px;height:41.5px;background:#fafafa"><i>2</i><b style="font-size:18.5px;color:#2c2c2c" class="">W</b></div>
<div class="abs key" style="left:74.5px;top:450.0px;width:31.0px;height:41.5px;background:#fafafa"><i>3</i><b style="font-size:18.5px;color:#2c2c2c" class="">E</b></div>
<div class="abs key" style="left:109.3px;top:450.0px;width:31.0px;height:41.5px;background:#fafafa"><i>4</i><b style="font-size:18.5px;color:#2c2c2c" class="">R</b></div>
<div class="abs key" style="left:144.1px;top:450.0px;width:31.0px;height:41.5px;background:#fafafa"><i>5</i><b style="font-size:18.5px;color:#2c2c2c" class="">T</b></div>
<div class="abs key" style="left:178.9px;top:450.0px;width:31.0px;height:41.5px;background:#fafafa"><i>6</i><b style="font-size:18.5px;color:#2c2c2c" class="">Y</b></div>
<div class="abs key" style="left:213.8px;top:450.0px;width:31.0px;height:41.5px;background:#fafafa"><i>7</i><b style="font-size:18.5px;color:#2c2c2c" class="">U</b></div>
<div class="abs key" style="left:248.6px;top:450.0px;width:31.0px;height:41.5px;background:#fafafa"><i>8</i><b style="font-size:18.5px;color:#2c2c2c" class="">I</b></div>
<div class="abs key" style="left:283.4px;top:450.0px;width:31.0px;height:41.5px;background:#fafafa"><i>9</i><b style="font-size:18.5px;color:#2c2c2c" class="">O</b></div>
<div class="abs key" style="left:318.3px;top:450.0px;width:31.0px;height:41.5px;background:#fafafa"><i>0</i><b style="font-size:18.5px;color:#2c2c2c" class="">P</b></div>
<div class="abs key" style="left:21.9px;top:505.4px;width:31.0px;height:41.5px;background:#fafafa"><i>~</i><b style="font-size:18.5px;color:#2c2c2c" class="">A</b></div>
<div class="abs key" style="left:56.7px;top:505.4px;width:31.0px;height:41.5px;background:#fafafa"><i>!</i><b style="font-size:18.5px;color:#2c2c2c" class="">S</b></div>
<div class="abs key" style="left:91.6px;top:505.4px;width:31.0px;height:41.5px;background:#fafafa"><i>@</i><b style="font-size:18.5px;color:#2c2c2c" class="">D</b></div>
<div class="abs key" style="left:126.4px;top:505.4px;width:31.0px;height:41.5px;background:#fafafa"><i>#</i><b style="font-size:18.5px;color:#2c2c2c" class="">F</b></div>
<div class="abs key" style="left:161.2px;top:505.4px;width:31.0px;height:41.5px;background:#fafafa"><i>%</i><b style="font-size:18.5px;color:#2c2c2c" class="">G</b></div>
<div class="abs key" style="left:196.0px;top:505.4px;width:31.0px;height:41.5px;background:#fafafa"><i>'</i><b style="font-size:18.5px;color:#2c2c2c" class="">H</b></div>
<div class="abs key" style="left:230.9px;top:505.4px;width:31.0px;height:41.5px;background:#fafafa"><i>^</i><b style="font-size:18.5px;color:#2c2c2c" class="">J</b></div>
<div class="abs key" style="left:265.7px;top:505.4px;width:31.0px;height:41.5px;background:#fafafa"><i>*</i><b style="font-size:18.5px;color:#2c2c2c" class="">K</b></div>
<div class="abs key" style="left:300.5px;top:505.4px;width:31.0px;height:41.5px;background:#fafafa"><i>?</i><b style="font-size:18.5px;color:#2c2c2c" class="">L</b></div>
<div class="abs key" style="left:4.8px;top:560.4px;width:48.8px;height:41.5px;background:#c9cacc"><b style="font-size:15px;color:#222" class="ph n">分词</b></div>
<div class="abs key" style="left:56.9px;top:560.4px;width:31.0px;height:41.5px;background:#fafafa"><i>(</i><b style="font-size:18.5px;color:#2c2c2c" class="">Z</b></div>
<div class="abs key" style="left:91.7px;top:560.4px;width:31.0px;height:41.5px;background:#fafafa"><i>)</i><b style="font-size:18.5px;color:#2c2c2c" class="">X</b></div>
<div class="abs key" style="left:126.6px;top:560.4px;width:31.0px;height:41.5px;background:#fafafa"><i>.</i><b style="font-size:18.5px;color:#2c2c2c" class="">C</b></div>
<div class="abs key" style="left:161.4px;top:560.4px;width:31.0px;height:41.5px;background:#fafafa"><i>-</i><b style="font-size:18.5px;color:#2c2c2c" class="">V</b></div>
<div class="abs key" style="left:196.2px;top:560.4px;width:31.0px;height:41.5px;background:#fafafa"><i>:</i><b style="font-size:18.5px;color:#2c2c2c" class="">B</b></div>
<div class="abs key" style="left:231.0px;top:560.4px;width:31.0px;height:41.5px;background:#fafafa"><i>;</i><b style="font-size:18.5px;color:#2c2c2c" class="">N</b></div>
<div class="abs key" style="left:265.9px;top:560.4px;width:31.0px;height:41.5px;background:#fafafa"><i>/</i><b style="font-size:18.5px;color:#2c2c2c" class="">M</b></div>
<div class="abs key" style="left:300.5px;top:560.4px;width:48.5px;height:41.5px;background:#c9cacc"><b style="font-size:18.5px;color:#2c2c2c" class=""></b></div>
<svg style="left:312px;top:574px" width="24" height="15" viewBox="0 0 23 15"><path d="M6.500 .8 H21 a1.200 1.200 0 0 1 1.200 1.200 V13 a1.200 1.200 0 0 1 -1.200 1.200 H6.500 L.9 7.500 Z" fill="none" stroke="#222" stroke-width="1.500" stroke-linejoin="round"/><path d="M10.800 5 L15.800 10 M15.800 5 L10.800 10" stroke="#222" stroke-width="1.500"/></svg>
<div class="abs key" style="left:4.8px;top:616.0px;width:48.8px;height:41.5px;background:#c9cacc"><b style="font-size:15px;color:#222" class="ph n">符</b></div>
<div class="abs key" style="left:56.9px;top:616.0px;width:49.0px;height:41.5px;background:#c9cacc"><b style="font-size:15px;color:#222" class="n">123</b></div>
<div class="abs key" style="left:109.0px;top:616.0px;width:31.0px;height:41.5px;background:#fafafa"><b style="font-size:22px;color:#2a2a2a;top:7.500px;transform:none">,</b></div>
<div class="abs key" style="left:144.1px;top:616.0px;width:65.6px;height:41.5px;background:#fafafa"><b style="font-size:18.5px;color:#2c2c2c" class=""></b></div>
<svg style="left:166px;top:626px" width="22" height="22" viewBox="0 0 22 22"><rect x="8.300" y=".8" width="5.700" height="9.300" rx="2.850" fill="#f0f0f0" stroke="#222" stroke-width="1.300"/><path d="M6.800 6.500 Q6.800 11.700 11.200 11.700 Q15.600 11.700 15.600 6.500" fill="none" stroke="#222" stroke-width="1"/><path d="M1 16 V20.600 H20.600 V16" fill="none" stroke="#222" stroke-width="1.500"/></svg>
<div class="abs key" style="left:213.4px;top:616.0px;width:32.0px;height:41.5px;background:#fafafa"><b style="font-size:16px;color:#222;top:11px;left:9.500px;transform:none" class="ph">。</b></div>
<div class="abs key" style="left:248.1px;top:616.0px;width:48.5px;height:41.5px;background:#c9cacc"><b style="font-size:18.5px;color:#2c2c2c" class=""></b></div>
<div class="abs ph" style="left:253.500px;top:626px;font-size:14.500px;line-height:22px;color:#2c2c2c;white-space:nowrap;letter-spacing:.9px">中<span style="color:#8e8e8e">/英</span></div>
<div class="abs key" style="left:300.300px;top:616px;width:48.500px;height:41.5px;background:linear-gradient(175deg,#06df89,#0cd57f 55%,#10ca74);box-shadow:none"><b class="ph n" style="font-size:15px;color:#fff">搜索</b></div>
<div class="abs" style="left:0;top:667px;width:353px;height:39px;background:#f8f8f7"></div>
<svg style="left:76px;top:679px" width="15" height="15"><rect x=".5" y=".5" width="14" height="14" rx="1.500" fill="none" stroke="#aaa" stroke-width="1"/></svg>
<svg style="left:168px;top:678px" width="17" height="17"><circle cx="8.500" cy="8.500" r="8" fill="none" stroke="#aaa" stroke-width="1"/></svg>
<svg style="left:263px;top:678px" width="17" height="17"><path d="M15.500 1 L1 8.500 L15.500 16 Z" fill="none" stroke="#aaa" stroke-width="1" stroke-linejoin="round"/></svg>
</div>

<!-- cursor -->
<svg style="left:355px;top:80px" width="14" height="21" viewBox="0 0 14 21"><path d="M1 1 V17 L4.800 13.500 L7.600 19.800 L10 18.800 L7.300 12.600 H12.400 Z" fill="#fff" stroke="#000" stroke-width="1"/></svg>
</body>
</html>
